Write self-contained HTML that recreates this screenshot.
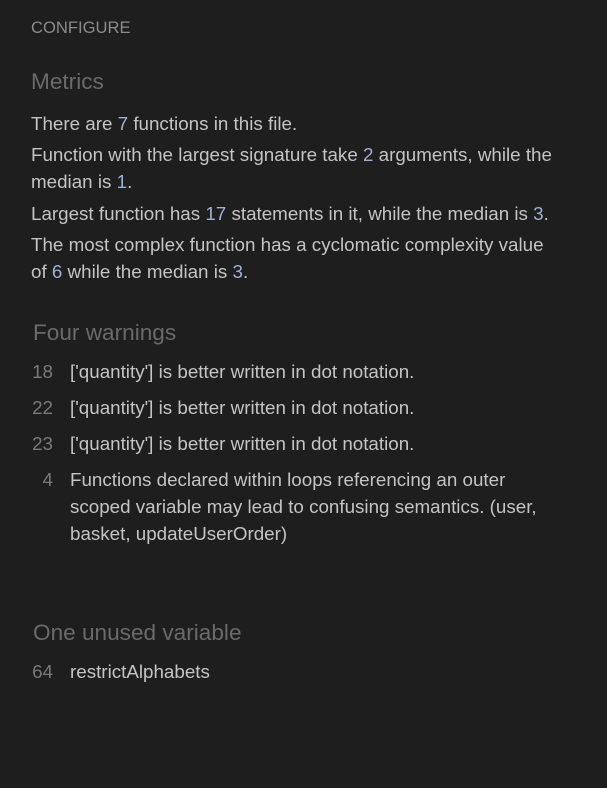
<!DOCTYPE html>
<html><head><meta charset="utf-8"><style>
html,body{margin:0;padding:0;background:#1e1e1e;width:607px;height:788px;overflow:hidden}
body{font-family:"Liberation Sans",sans-serif;color:#c4c4c4;position:relative}
.a{position:absolute;white-space:nowrap}
.n{color:#9fb0d6}
.cfg{left:31px;top:18px;font-size:16.6px;color:#8a8a8a}
h2{position:absolute;margin:0;font-weight:normal;font-size:22.6px;color:#6a6a6a}
.p{position:absolute;left:31px;font-size:18.8px;line-height:27px;width:530px}
.ln{position:absolute;font-size:18.8px;color:#7a7a7a;width:22px;text-align:right;left:31px}
.w{position:absolute;left:70px;font-size:18.8px;line-height:27px;width:480px}
</style></head><body>
<div class="a cfg">CONFIGURE</div>
<h2 style="left:31px;top:69px">Metrics</h2>
<div class="p" style="top:110px">There are <span class="n">7</span> functions in this file.</div>
<div class="p" style="top:141px">Function with the largest signature take <span class="n">2</span> arguments, while the median is <span class="n">1</span>.</div>
<div class="p" style="top:200px">Largest function has <span class="n">17</span> statements in it, while the median is <span class="n">3</span>.</div>
<div class="p" style="top:231px">The most complex function has a cyclomatic complexity value of <span class="n">6</span> while the median is <span class="n">3</span>.</div>
<h2 style="left:33px;top:320px">Four warnings</h2>
<div class="ln" style="top:361px">18</div><div class="w" style="top:358px">['quantity'] is better written in dot notation.</div>
<div class="ln" style="top:397px">22</div><div class="w" style="top:394px">['quantity'] is better written in dot notation.</div>
<div class="ln" style="top:433px">23</div><div class="w" style="top:430px">['quantity'] is better written in dot notation.</div>
<div class="ln" style="top:469px">4</div><div class="w" style="top:466px">Functions declared within loops referencing an outer scoped variable may lead to confusing semantics. (user, basket, updateUserOrder)</div>
<h2 style="left:33px;top:620px">One unused variable</h2>
<div class="ln" style="top:661px">64</div><div class="w" style="top:658px">restrictAlphabets</div>
</body></html>
